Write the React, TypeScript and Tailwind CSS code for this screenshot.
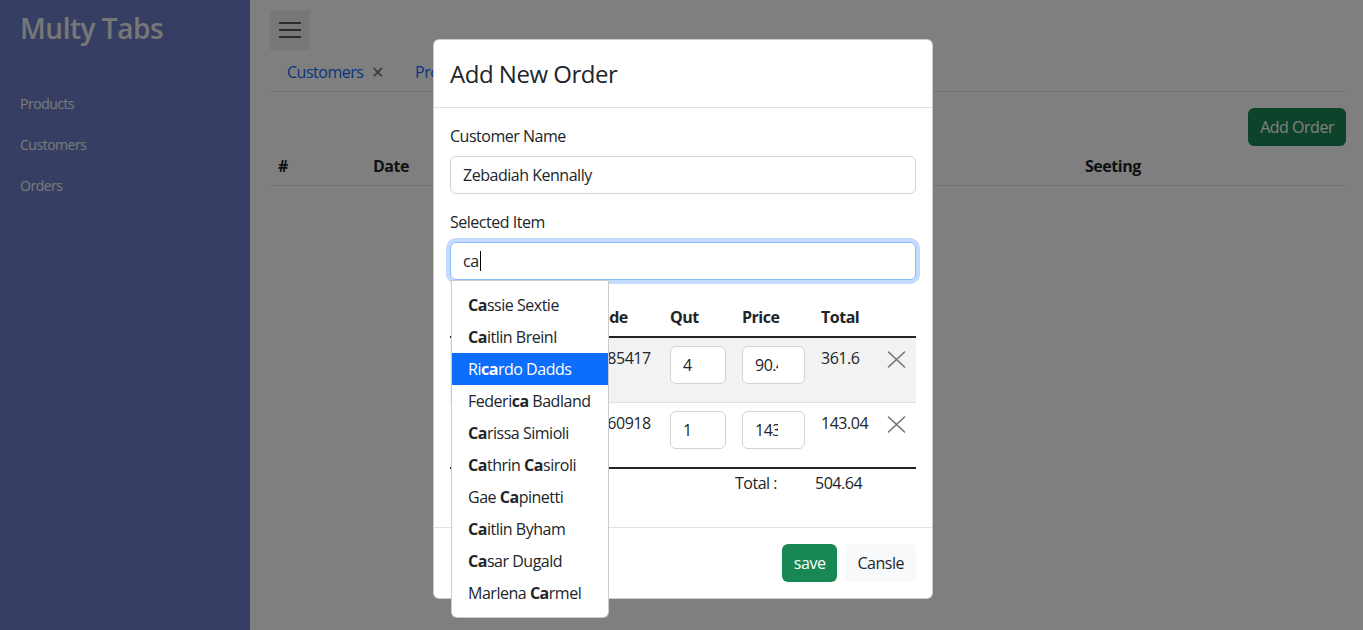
import React from "react";

const font = "font-['Segoe_UI','Open_Sans',sans-serif] tracking-[-0.03em]";

const suggestions: { parts: [string, boolean][]; active?: boolean }[] = [
    { parts: [["Ca", true], ["ssie Sextie", false]] },
    { parts: [["Ca", true], ["itlin Breinl", false]] },
    { parts: [["Ri", false], ["ca", true], ["rdo Dadds", false]], active: true },
    { parts: [["Federi", false], ["ca", true], [" Badland", false]] },
    { parts: [["Ca", true], ["rissa Simioli", false]] },
    { parts: [["Ca", true], ["thrin ", false], ["Ca", true], ["siroli", false]] },
    { parts: [["Gae ", false], ["Ca", true], ["pinetti", false]] },
    { parts: [["Ca", true], ["itlin Byham", false]] },
    { parts: [["Ca", true], ["sar Dugald", false]] },
    { parts: [["Marlena ", false], ["Ca", true], ["rmel", false]] },
];

const items = [
    { n: 1, name: "Lettuce Romaine", code: "5685417", qty: "4", price: "90.4", total: "361.6" },
    { n: 2, name: "Bread Rolls Mix", code: "3660918", qty: "1", price: "143.04", total: "143.04" },
];

function CloseIcon() {
    return (
        <svg width="19" height="17" viewBox="0 0 19 17" className="text-[#6c757d]">
            <path d="M1.5 1 L17.5 16 M17.5 1 L1.5 16" stroke="currentColor" strokeWidth="1.6" strokeLinecap="round" />
        </svg>
    );
}

function Page() {
    return (
        <div className="flex h-[630px] w-full overflow-hidden">
            <aside className="w-[250px] shrink-0 bg-[#6c7ec6] px-5 pt-[10px]">
                <h1 className="text-[28px] font-semibold leading-[36px] text-[#eeeeee]">Multy Tabs</h1>
                <nav className="mt-[46px] flex flex-col gap-[17px] text-[14px] leading-[24px] text-[#f4f4f4]">
                    <a>Products</a>
                    <a>Customers</a>
                    <a>Orders</a>
                </nav>
            </aside>

            <main className="flex-1 bg-white pl-5 pr-[17px] pt-[10px] text-[#212529]">
                <button className="flex h-10 w-10 flex-col items-center justify-center gap-[5px] bg-[#eeeeee]">
                    <span className="block h-[2px] w-[22px] bg-[#555]" />
                    <span className="block h-[2px] w-[22px] bg-[#555]" />
                    <span className="block h-[2px] w-[22px] bg-[#555]" />
                </button>

                <div className="mt-[2px] flex h-10 items-center border-b border-[#dee2e6] text-base">
                    <div className="flex items-center gap-[7px] pl-[17px] pr-4 text-[#0d6efd]">
                        Customers <span className="text-[#6c757d]">✕</span>
                    </div>
                    <div className="flex items-center gap-[7px] px-4 text-[#0d6efd]">
                        Products <span className="text-[#6c757d]">✕</span>
                    </div>
                    <div className="flex items-center gap-[7px] px-4 text-[#0d6efd]">
                        Orders <span className="text-[#6c757d]">✕</span>
                    </div>
                </div>

                <div className="mt-4 flex justify-end">
                    <button className="h-[38px] rounded-md bg-[#198754] px-3 text-base text-white">Add Order</button>
                </div>

                <div className="flex h-10 items-center border-b border-[#dee2e6] text-base font-bold">
                    <div className="w-[95px] px-2">#</div>
                    <div className="w-[180px] px-2">Date</div>
                    <div className="w-[260px] px-2">Customer</div>
                    <div className="w-[272px] px-2">Total</div>
                    <div className="flex-1 px-2">Seeting</div>
                </div>
            </main>
        </div>
    );
}

function OrderModal() {
    return (
        <div className="absolute left-[433px] top-[39px] w-[500px] rounded-md border border-black/20 bg-white text-[#212529]">
            <div className="flex h-[68px] items-center border-b border-[#dee2e6] px-4">
                <h2 className="text-[24px] font-medium leading-[29px]">Add New Order</h2>
            </div>

            <div className="p-4 text-base leading-6">
                <label className="mb-2 block">Customer Name</label>
                <input
                    readOnly
                    value="Zebadiah Kennally"
                    className="mb-4 block h-[38px] w-full rounded-md border border-[#ced4da] px-3 outline-none"
                />

                <label className="mb-2 block">Selected Item</label>
                <div className="relative">
                    <div className="flex h-[38px] w-full items-center rounded-md border border-[#86b7fe] px-3 shadow-[0_0_0_4px_rgba(13,110,253,0.25)]">
                        ca<span className="ml-px inline-block h-[20px] w-px bg-black" />
                    </div>

                    <div className="absolute left-px top-[38px] z-10 w-[158px] rounded-b-md border border-black/20 bg-white py-2">
                        {suggestions.map((s, i) => (
                            <div
                                key={i}
                                className={
                                    s.active
                                        ? "h-8 whitespace-nowrap bg-[#0d6efd] px-4 py-1 text-white"
                                        : "h-8 whitespace-nowrap px-4 py-1 text-[#212529]"
                                }
                            >
                                {s.parts.map(([t, b], j) => (
                                    <span key={j} className={b ? "font-bold" : ""}>{t}</span>
                                ))}
                            </div>
                        ))}
                    </div>
                </div>

                <div className="mt-[17px]">
                    <div className="flex h-[41px] items-center border-b-2 border-[#212529] font-bold">
                        <div className="w-[30px] px-2">#</div>
                        <div className="w-[102px] px-2">Item</div>
                        <div className="w-[80px] px-2">Code</div>
                        <div className="w-[72px] px-2">Qut</div>
                        <div className="w-[79px] px-2">Price</div>
                        <div className="w-[66px] px-2">Total</div>
                        <div className="w-[37px] px-2" />
                    </div>
                    {items.map((it, i) => (
                        <div
                            key={it.n}
                            className={
                                i === 0
                                    ? "flex h-[65px] border-b border-[#dee2e6] bg-[#f2f2f2]"
                                    : "flex h-[64px]"
                            }
                        >
                            <div className="w-[30px] shrink-0 p-2">{it.n}</div>
                            <div className="w-[102px] shrink-0 p-2 leading-6">{it.name}</div>
                            <div className="w-[80px] shrink-0 p-2">{it.code}</div>
                            <div className="w-[72px] shrink-0 p-2">
                                <input readOnly value={it.qty} className="h-[38px] w-[56px] rounded-md border border-[#ced4da] bg-white pl-3 pr-[26px] outline-none" />
                            </div>
                            <div className="w-[79px] shrink-0 p-2">
                                <input readOnly value={it.price} className="h-[38px] w-[63px] rounded-md border border-[#ced4da] bg-white pl-3 pr-[26px] outline-none" />
                            </div>
                            <div className="w-[66px] shrink-0 p-2">{it.total}</div>
                            <div className="w-[37px] shrink-0 px-2 pt-[13px]">
                                <CloseIcon />
                            </div>
                        </div>
                    ))}
                    <div className="flex h-[44px] border-t-2 border-[#212529] pt-[2px]">
                        <div className="w-[284px]" />
                        <div className="w-[80px] px-[1px]">Total :</div>
                        <div className="px-[1px]">504.64</div>
                    </div>
                </div>
            </div>

            <div className="flex justify-end gap-2 border-t border-[#dee2e6] px-4 py-4">
                <button className="h-[38px] rounded-md bg-[#198754] px-3 text-base text-white">save</button>
                <button className="h-[38px] rounded-md bg-[#f8f9fa] px-3 text-base text-[#212529]">Cansle</button>
            </div>
        </div>
    );
}

export default function App() {
    return (
        <div className={`relative h-[630px] w-full overflow-hidden ${font}`}>
            <Page />
            <div className="absolute inset-0 bg-black/50" />
            <OrderModal />
        </div>
    );
}
